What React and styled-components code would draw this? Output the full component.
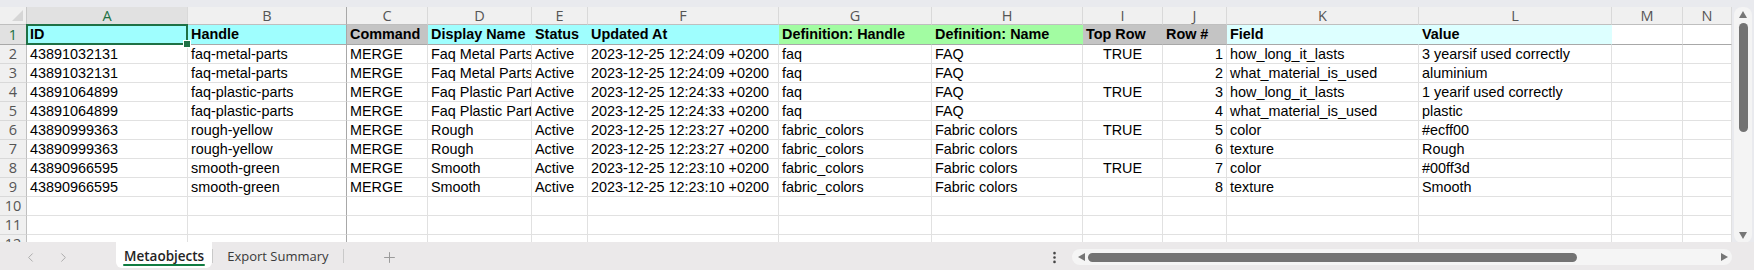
import React from "react";
import styled, { createGlobalStyle } from "styled-components";
import { ChevronLeft, ChevronRight, Plus, EllipsisVertical } from "lucide-react";

const GlobalStyle = createGlobalStyle`
  html, body {
    margin: 0;
    padding: 0;
    background: #e9eaee;
  }
  * {
    box-sizing: border-box;
  }
`;

const COLS = [161, 159, 81, 104, 56, 191, 153, 151, 80, 64, 192, 193, 71, 49];
const LETTERS = ["A", "B", "C", "D", "E", "F", "G", "H", "I", "J", "K", "L", "M", "N"];
const TEMPLATE = `27px ${COLS.map((w) => w + "px").join(" ")}`;

const CYAN = "#9ffefe";
const GRAY = "#c4c4c4";
const GREEN = "#a2fca2";
const PALE = "#ddffff";

const HEADERS = [
  { t: "ID", bg: CYAN },
  { t: "Handle", bg: CYAN },
  { t: "Command", bg: GRAY },
  { t: "Display Name", bg: CYAN },
  { t: "Status", bg: CYAN },
  { t: "Updated At", bg: CYAN },
  { t: "Definition: Handle", bg: GREEN },
  { t: "Definition: Name", bg: GREEN },
  { t: "Top Row", bg: GRAY },
  { t: "Row #", bg: GRAY },
  { t: "Field", bg: PALE },
  { t: "Value", bg: PALE },
  { t: "", bg: null },
  { t: "", bg: null },
];

const ALIGN = ["left", "left", "left", "left", "left", "left", "left", "left", "center", "right", "left", "left", "left", "left"];

const DATA = [
  ["43891032131", "faq-metal-parts", "MERGE", "Faq Metal Parts", "Active", "2023-12-25 12:24:09 +0200", "faq", "FAQ", "TRUE", "1", "how_long_it_lasts", "3 yearsif used correctly"],
  ["43891032131", "faq-metal-parts", "MERGE", "Faq Metal Parts", "Active", "2023-12-25 12:24:09 +0200", "faq", "FAQ", "", "2", "what_material_is_used", "aluminium"],
  ["43891064899", "faq-plastic-parts", "MERGE", "Faq Plastic Parts", "Active", "2023-12-25 12:24:33 +0200", "faq", "FAQ", "TRUE", "3", "how_long_it_lasts", "1 yearif used correctly"],
  ["43891064899", "faq-plastic-parts", "MERGE", "Faq Plastic Parts", "Active", "2023-12-25 12:24:33 +0200", "faq", "FAQ", "", "4", "what_material_is_used", "plastic"],
  ["43890999363", "rough-yellow", "MERGE", "Rough", "Active", "2023-12-25 12:23:27 +0200", "fabric_colors", "Fabric colors", "TRUE", "5", "color", "#ecff00"],
  ["43890999363", "rough-yellow", "MERGE", "Rough", "Active", "2023-12-25 12:23:27 +0200", "fabric_colors", "Fabric colors", "", "6", "texture", "Rough"],
  ["43890966595", "smooth-green", "MERGE", "Smooth", "Active", "2023-12-25 12:23:10 +0200", "fabric_colors", "Fabric colors", "TRUE", "7", "color", "#00ff3d"],
  ["43890966595", "smooth-green", "MERGE", "Smooth", "Active", "2023-12-25 12:23:10 +0200", "fabric_colors", "Fabric colors", "", "8", "texture", "Smooth"],
];

const FROZEN = "#a8a8a8";
const GRID = "#e1e1e1";
const EXCEL_GREEN = "#1e7145";

const Page = styled.div`
  width: 1754px;
  height: 270px;
  display: flex;
  flex-direction: column;
  background: #e9eaee;
  overflow: hidden;
`;

const TopStrip = styled.div`
  height: 7px;
  flex: none;
`;

const Main = styled.div`
  height: 235px;
  flex: none;
  display: flex;
  gap: 2px;
`;

const Sheet = styled.div`
  width: 1732px;
  height: 235px;
  background: #fff;
  overflow: hidden;
  display: flex;
  flex-direction: column;
`;

const Row = styled.div`
  display: grid;
  grid-template-columns: ${TEMPLATE};
  height: ${(p) => p.$h}px;
  flex: none;
`;

const Corner = styled.div`
  position: relative;
  background: #f0f0f0;
  border-right: 1px solid #c8c8c8;
  border-bottom: 1px solid #bfbfbf;

  &::after {
    content: "";
    position: absolute;
    right: 3px;
    bottom: 3px;
    border-left: 11px solid transparent;
    border-bottom: 11px solid #d6d6d6;
  }
`;

const ColHead = styled.div`
  background: ${(p) => (p.$active ? "#e1e1e1" : "#f0f0f0")};
  border-right: 1px solid ${(p) => (p.$frozen ? FROZEN : "#d9d9d9")};
  border-bottom: 1px solid #bfbfbf;
  color: ${(p) => (p.$active ? EXCEL_GREEN : "#555")};
  font: 400 14.5px "Open Sans", "Noto Sans", sans-serif;
  line-height: 17px;
  text-align: center;
`;

const RowHead = styled.div`
  background: ${(p) => (p.$active ? "#e1e1e1" : "#f0f0f0")};
  border-right: 1px solid #bfbfbf;
  border-bottom: 1px solid ${(p) => (p.$frozen ? FROZEN : "#d9d9d9")};
  color: ${(p) => (p.$active ? EXCEL_GREEN : "#555")};
  font: 400 14.5px "Open Sans", "Noto Sans", sans-serif;
  line-height: ${(p) => p.$lh}px;
  text-align: center;
`;

const Cell = styled.div`
  position: relative;
  background: ${(p) => p.$bg || "#fff"};
  border-right: 1px solid ${(p) => (p.$frozen ? FROZEN : p.$bg || GRID)};
  border-bottom: 1px solid ${(p) => (p.$hline ? FROZEN : GRID)};
  font: ${(p) => (p.$bold ? 700 : 400)} 14.4px "Liberation Sans", Arial, sans-serif;
  color: #000;
  text-align: ${(p) => p.$align || "left"};
  padding: 0 3px;
  line-height: ${(p) => p.$lh}px;
  white-space: nowrap;
  overflow: ${(p) => (p.$selected ? "visible" : "hidden")};
  z-index: ${(p) => (p.$selected ? 2 : 0)};

  ${(p) =>
    p.$selected &&
    `
    &::after {
      content: "";
      position: absolute;
      left: -1px;
      top: -1px;
      right: -1px;
      bottom: -1px;
      border: 2px solid ${EXCEL_GREEN};
      pointer-events: none;
    }
    &::before {
      content: "";
      position: absolute;
      right: -4px;
      bottom: -4px;
      width: 6px;
      height: 6px;
      background: ${EXCEL_GREEN};
      border: 1px solid #fff;
      z-index: 3;
    }
  `}
`;

const VScroll = styled.div`
  width: 18px;
  height: 236px;
  background: #f4f4f4;
  border-radius: 8px;
  display: flex;
  flex-direction: column;
  align-items: center;
  padding: 4px 0 4px;
`;

const Arrow = styled.span`
  width: 0;
  height: 0;
  flex: none;
  border-style: solid;
  border-color: transparent;
  ${(p) =>
    ({
      up: "border-width: 0 4px 7px 4px; border-bottom-color: #767676;",
      down: "border-width: 7px 4px 0 4px; border-top-color: #767676;",
      left: "border-width: 4px 7px 4px 0; border-right-color: #767676;",
      right: "border-width: 4px 0 4px 7px; border-left-color: #767676;",
    })[p.$dir]}
`;

const VThumb = styled.div`
  width: 9px;
  height: 109px;
  margin-top: 5px;
  border-radius: 5px;
  background: #737373;
`;

const Spacer = styled.div`
  flex: 1;
`;

const BottomBar = styled.div`
  height: 28px;
  flex: none;
  display: flex;
  align-items: flex-start;
  background: #ebe9ea;
`;

const Nav = styled.div`
  width: 116px;
  height: 30px;
  display: flex;
  align-items: center;
  gap: 18px;
  padding-left: 23px;
  color: #a8a8a8;
`;

const Tab = styled.div`
  height: 26px;
  padding: 2px ${(p) => (p.$active ? 8 : 14)}px 0;
  display: flex;
  align-items: center;
  position: relative;
  background: ${(p) => (p.$active ? "#fff" : "transparent")};
  border-radius: 0 0 6px 6px;
  font: ${(p) => (p.$active ? 600 : 400)} ${(p) => (p.$active ? 13.5 : 13)}px "Open Sans", "Noto Sans", sans-serif;
  color: ${(p) => (p.$active ? "#242424" : "#3a3a3a")};

  ${(p) =>
    p.$active &&
    `
    &::after {
      content: "";
      position: absolute;
      left: 7px;
      right: 7px;
      bottom: 2px;
      height: 2px;
      border-radius: 1px;
      background: #107c41;
    }
  `}
`;

const Sep = styled.div`
  width: 1px;
  height: 14px;
  margin-top: 7px;
  background: #c9c9c9;
`;

const AddButton = styled.div`
  width: 92px;
  height: 30px;
  display: flex;
  align-items: center;
  justify-content: center;
  color: #9a9a9a;
`;

const Dots = styled.div`
  width: 36px;
  height: 30px;
  display: flex;
  align-items: center;
  justify-content: center;
  color: #444;
`;

const HScroll = styled.div`
  width: 660px;
  height: 16px;
  margin-top: 7px;
  background: #f5f5f5;
  border-radius: 8px;
  display: flex;
  align-items: center;
  padding: 0 4px 0 6px;
`;

const HThumb = styled.div`
  width: 489px;
  height: 9px;
  margin-left: 3px;
  border-radius: 5px;
  background: #737373;
`;

const RightPad = styled.div`
  width: 22px;
  flex: none;
`;

export default function App() {
  const emptyRows = [10, 11, 12];
  return (
    <Page>
      <GlobalStyle />
      <TopStrip />
      <Main>
        <Sheet>
          <Row $h={18}>
            <Corner />
            {LETTERS.map((l, i) => (
              <ColHead key={l} $active={i === 0} $frozen={i === 1}>
                {l}
              </ColHead>
            ))}
          </Row>
          <Row $h={20}>
            <RowHead $active $frozen $lh={19}>
              1
            </RowHead>
            {HEADERS.map((h, i) => (
              <Cell key={i} $bg={h.bg} $bold $hline $frozen={i === 1} $selected={i === 0} $lh={19}>
                {h.t}
              </Cell>
            ))}
          </Row>
          {DATA.map((r, ri) => (
            <Row $h={19} key={ri}>
              <RowHead $lh={18}>{ri + 2}</RowHead>
              {LETTERS.map((_, i) => (
                <Cell key={i} $align={ALIGN[i]} $frozen={i === 1} $lh={18}>
                  {r[i] || ""}
                </Cell>
              ))}
            </Row>
          ))}
          {emptyRows.map((n) => (
            <Row $h={19} key={n}>
              <RowHead $lh={18}>{n}</RowHead>
              {LETTERS.map((_, i) => (
                <Cell key={i} $frozen={i === 1} $lh={18} />
              ))}
            </Row>
          ))}
        </Sheet>
        <VScroll>
          <Arrow $dir="up" />
          <VThumb />
          <Spacer />
          <Arrow $dir="down" />
        </VScroll>
      </Main>
      <BottomBar>
        <Nav>
          <ChevronLeft size={15} strokeWidth={1.5} />
          <ChevronRight size={15} strokeWidth={1.5} />
        </Nav>
        <Tab $active>Metaobjects</Tab>
        <Sep />
        <Tab>Export Summary</Tab>
        <Sep />
        <AddButton>
          <Plus size={17} strokeWidth={1.4} />
        </AddButton>
        <Spacer />
        <Dots>
          <EllipsisVertical size={15} strokeWidth={2.2} />
        </Dots>
        <HScroll>
          <Arrow $dir="left" />
          <HThumb />
          <Spacer />
          <Arrow $dir="right" />
        </HScroll>
        <RightPad />
      </BottomBar>
    </Page>
  );
}
